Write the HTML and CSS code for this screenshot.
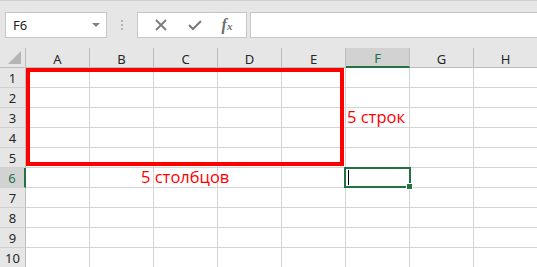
FILE: index.html
```html
<!DOCTYPE html>
<html lang="ru">
<head>
    <meta charset="UTF-8">
    <title>Excel</title>
    <link rel="stylesheet" href="styles.css">
</head>
<body>
    <div class="toolbar">
        <div class="name-box">
            <span class="name">F6</span>
            <span class="arrow"></span>
        </div>
        <div class="dots"><i></i><i></i><i></i></div>
        <div class="fx-buttons">
            <svg width="14" height="14" viewBox="0 0 14 14"><path d="M2 2 L12 12 M12 2 L2 12" stroke="#7a7a7a" stroke-width="1.8" fill="none"/></svg>
            <svg width="16" height="14" viewBox="0 0 16 14"><path d="M2 7 L6 11 L14 3" stroke="#7a7a7a" stroke-width="2" fill="none"/></svg>
            <span class="fx">f<sub>x</sub></span>
        </div>
        <div class="formula"></div>
    </div>

    <div class="sheet">
        <div class="grid">
            <div class="corner"><span class="tri"></span></div>
            <div class="col-head">A</div>
            <div class="col-head">B</div>
            <div class="col-head">C</div>
            <div class="col-head">D</div>
            <div class="col-head">E</div>
            <div class="col-head selected">F</div>
            <div class="col-head">G</div>
            <div class="col-head">H</div>
        </div>
        <div class="grid" id="rows"></div>

        <div class="red-box"></div>
        <div class="note note-rows">5 строк</div>
        <div class="note note-cols">5 столбцов</div>
        <div class="selection"><span class="caret"></span><span class="handle"></span></div>
    </div>

    <script>
        const rows = document.getElementById('rows');
        for (let r = 1; r <= 10; r++) {
            const head = document.createElement('div');
            head.className = r === 6 ? 'row-head selected' : 'row-head';
            head.textContent = r;
            rows.appendChild(head);
            for (let c = 0; c < 8; c++) {
                const cell = document.createElement('div');
                cell.className = 'cell';
                rows.appendChild(cell);
            }
        }
    </script>
</body>
</html>
```

FILE: styles.css
```css
:root {
    --bar-bg: #e6e6e6;
    --grid-line: #d4d4d4;
    --head-line: #bdbdbd;
    --excel-green: #217346;
    --note-red: #ff0000;
}

body {
    margin: 0;
    font-family: 'Noto Sans', sans-serif;
    background: white;
    overflow: hidden;
}

.toolbar {
    height: 48px;
    background: var(--bar-bg);
    border-top: 1px solid #d0d0d0;
    box-sizing: border-box;
    display: flex;
    align-items: flex-start;
    padding-top: 11px;
}

.name-box {
    margin-left: 5px;
    width: 102px;
    height: 26px;
    box-sizing: border-box;
    background: white;
    border: 1px solid #c6c6c6;
    display: flex;
    align-items: center;
    justify-content: space-between;
    padding: 0 6px 0 7px;
}

.name {
    font-size: 13px;
    color: #222;
}

.arrow {
    width: 0;
    height: 0;
    border-left: 4px solid transparent;
    border-right: 4px solid transparent;
    border-top: 4px solid #808080;
}

.dots {
    width: 30px;
    height: 26px;
    display: flex;
    flex-direction: column;
    align-items: center;
    justify-content: center;
    gap: 2px;
}

.dots i {
    width: 2px;
    height: 2px;
    background: #b4b4b4;
}

.fx-buttons {
    width: 110px;
    height: 26px;
    box-sizing: border-box;
    background: white;
    border: 1px solid #c6c6c6;
    display: flex;
    align-items: center;
    justify-content: space-around;
    padding: 0 4px 0 6px;
}

.fx {
    font-family: 'Liberation Serif', serif;
    font-style: italic;
    font-size: 16px;
    color: #6e6e6e;
    font-weight: bold;
}

.fx sub {
    font-size: 11px;
    vertical-align: 0;
}

.formula {
    flex: 1;
    height: 26px;
    margin-left: 3px;
    box-sizing: border-box;
    background: white;
    border: 1px solid #c6c6c6;
    border-right: none;
}

.sheet {
    position: relative;
}

.grid {
    display: grid;
    grid-template-columns: 26px repeat(8, 64px);
    grid-auto-rows: 20px;
}

.corner {
    background: var(--bar-bg);
    border-right: 1px solid var(--head-line);
    border-bottom: 1px solid var(--head-line);
    position: relative;
}

.tri {
    position: absolute;
    right: 4px;
    bottom: 3px;
    width: 0;
    height: 0;
    border-left: 13px solid transparent;
    border-bottom: 13px solid #b5b5b5;
}

.col-head,
.row-head {
    background: var(--bar-bg);
    font-size: 13px;
    color: #262626;
    display: flex;
    align-items: center;
    justify-content: center;
    box-sizing: border-box;
}

.col-head {
    border-right: 1px solid var(--head-line);
    border-bottom: 1px solid var(--head-line);
    padding-top: 2px;
}

.row-head {
    border-right: 1px solid var(--head-line);
    border-bottom: 1px solid #d0d0d0;
}

.col-head.selected {
    background: #d2d2d2;
    color: var(--excel-green);
    border-bottom: 2px solid var(--excel-green);
}

.row-head.selected {
    background: #d2d2d2;
    color: var(--excel-green);
    border-right: 2px solid var(--excel-green);
}

.cell {
    border-right: 1px solid var(--grid-line);
    border-bottom: 1px solid var(--grid-line);
    box-sizing: border-box;
}

.red-box {
    position: absolute;
    left: 26px;
    top: 20px;
    width: 318px;
    height: 98px;
    box-sizing: border-box;
    border: 4px solid var(--note-red);
}

.note {
    position: absolute;
    font-family: 'Open Sans', sans-serif;
    font-size: 16.5px;
    color: var(--note-red);
    line-height: 20px;
    white-space: nowrap;
}

.note-rows {
    left: 347px;
    top: 59px;
}

.note-cols {
    left: 141px;
    top: 119px;
}

.selection {
    position: absolute;
    left: 344px;
    top: 119px;
    width: 67px;
    height: 21px;
    box-sizing: border-box;
    border: 2px solid var(--excel-green);
}

.caret {
    position: absolute;
    left: 2px;
    top: 1px;
    width: 1px;
    height: 15px;
    background: black;
}

.handle {
    position: absolute;
    right: -4px;
    bottom: -4px;
    width: 5px;
    height: 5px;
    background: var(--excel-green);
    border: 1px solid white;
}
```
